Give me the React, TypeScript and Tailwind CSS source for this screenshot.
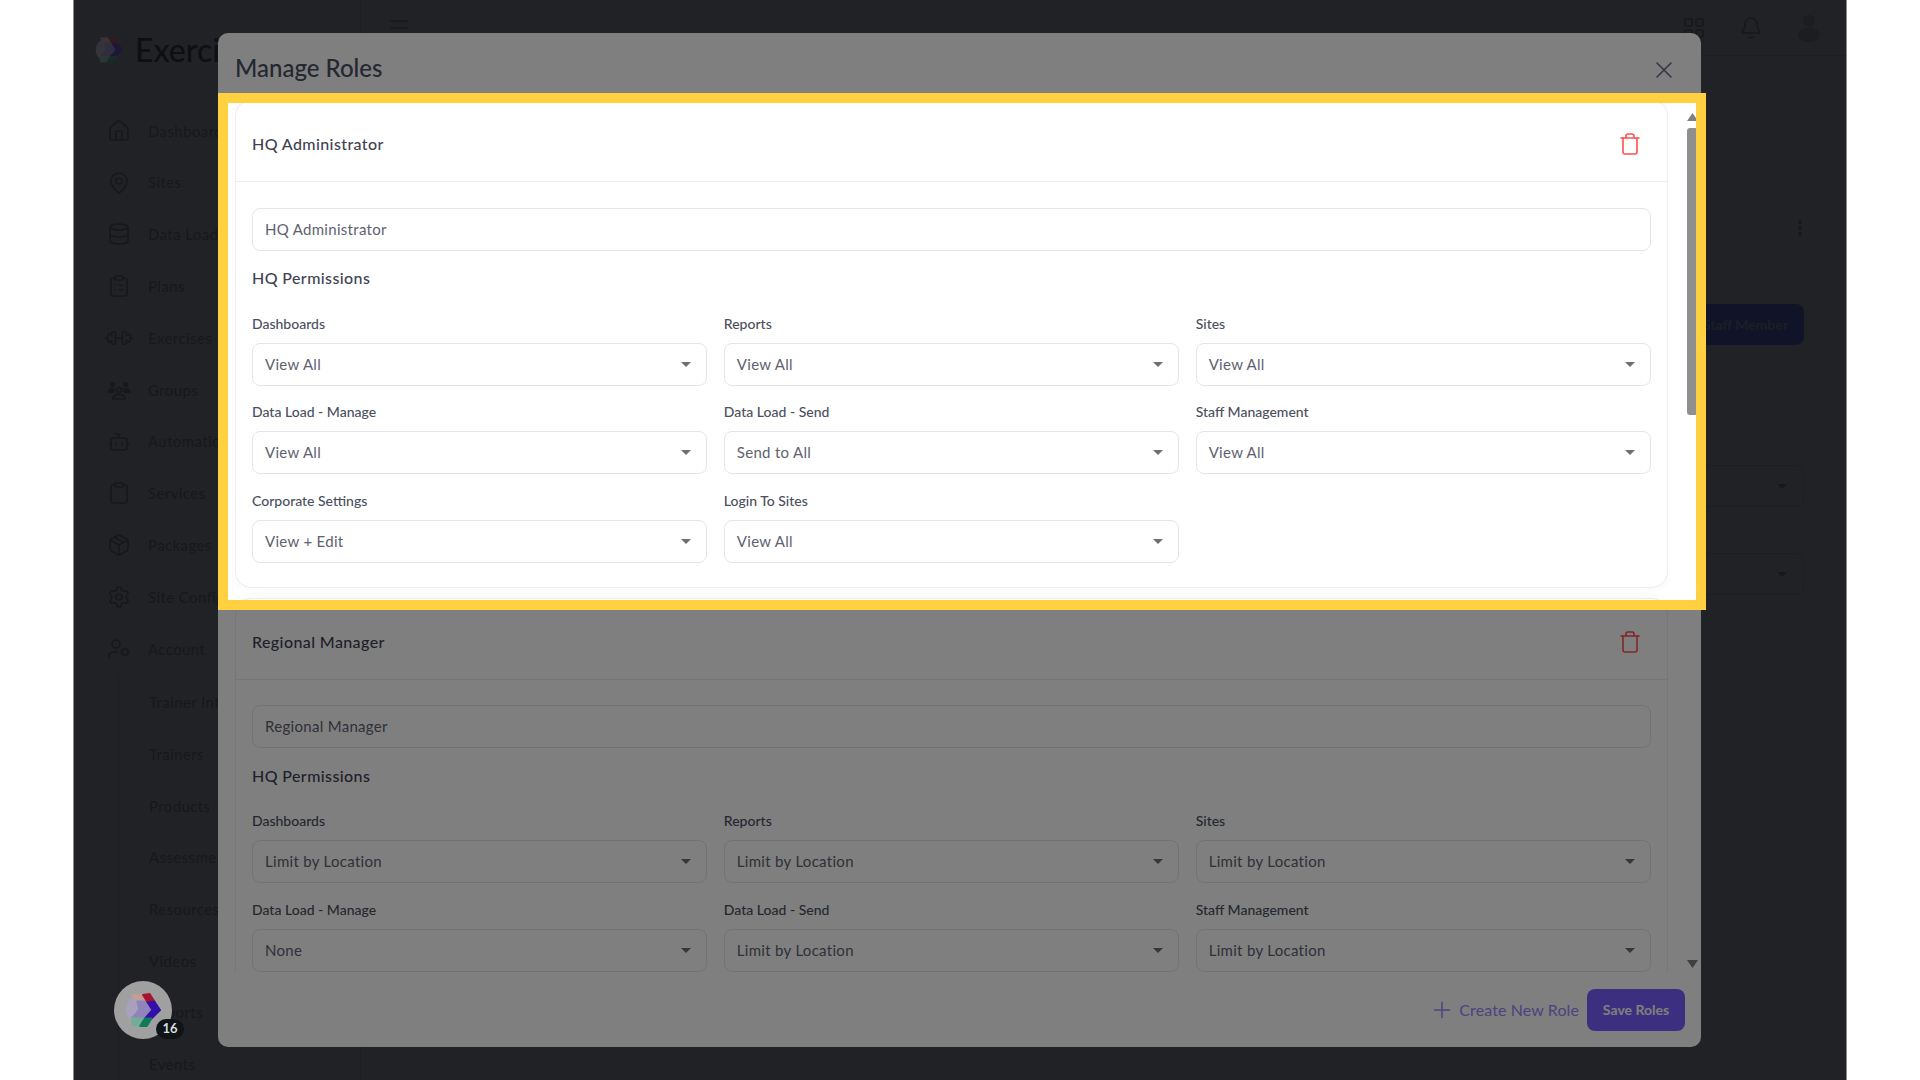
import {
  Bell,
  Bot,
  Clipboard,
  ClipboardList,
  Database,
  Dumbbell,
  Home,
  LayoutGrid,
  MapPin,
  Menu,
  MoreVertical,
  Package,
  Plus,
  Settings,
  Trash,
  UserCog,
  X,
} from "lucide-react";

function GroupIcon({ size }: { size: number }) {
  return (
    <svg viewBox="0 0 24 24" width={size} height={size} fill="currentColor">
      <circle cx="5.5" cy="6.5" r="2.6" />
      <circle cx="18.5" cy="6.5" r="2.6" />
      <path d="M0.5 15c0-3 2-5 5-5 1.2 0 2 .3 2.8 .8-.8 1-1.2 2.4-1 4.2z" />
      <path d="M23.5 15c0-3-2-5-5-5-1.2 0-2 .3-2.8 .8 .8 1 1.2 2.4 1 4.2z" />
      <circle cx="12" cy="12" r="2.5" fill="none" stroke="currentColor" strokeWidth="1.6" />
      <path d="M6 21c0-3 2.6-4.6 6-4.6s6 1.6 6 4.6z" fill="none" stroke="currentColor" strokeWidth="1.6" />
    </svg>
  );
}

const navItems = [
  { label: "Dashboard", icon: Home, iconClass: "" },
  { label: "Sites", icon: MapPin, iconClass: "" },
  { label: "Data Load", icon: Database, iconClass: "" },
  { label: "Plans", icon: ClipboardList, iconClass: "" },
  { label: "Exercises", icon: Dumbbell, iconClass: "rotate-45" },
  { label: "Groups", icon: GroupIcon, iconClass: "" },
  { label: "Automation", icon: Bot, iconClass: "" },
  { label: "Services", icon: Clipboard, iconClass: "" },
  { label: "Packages", icon: Package, iconClass: "" },
  { label: "Site Config", icon: Settings, iconClass: "" },
  { label: "Account", icon: UserCog, iconClass: "" },
];

const subItems = [
  "Trainer Info",
  "Trainers",
  "Products",
  "Assessments",
  "Resources",
  "Videos",
  "Reports",
  "Events",
];

const roles = [
  {
    name: "HQ Administrator",
    permissions: [
      ["Dashboards", "View All"],
      ["Reports", "View All"],
      ["Sites", "View All"],
      ["Data Load - Manage", "View All"],
      ["Data Load - Send", "Send to All"],
      ["Staff Management", "View All"],
      ["Corporate Settings", "View + Edit"],
      ["Login To Sites", "View All"],
    ],
  },
  {
    name: "Regional Manager",
    permissions: [
      ["Dashboards", "Limit by Location"],
      ["Reports", "Limit by Location"],
      ["Sites", "Limit by Location"],
      ["Data Load - Manage", "None"],
      ["Data Load - Send", "Limit by Location"],
      ["Staff Management", "Limit by Location"],
    ],
  },
];

function Logo({ className }: { className: string }) {
  return (
    <svg viewBox="0 0 38 38" className={className} strokeWidth="2" strokeLinejoin="round">
      <circle cx="17" cy="19" r="16" fill="#a9a0bc" />
      <polygon points="8,3 18,3 24,10 13,10" fill="#c49c98" stroke="#c49c98" />
      <polygon points="13,10 24,10 30,19 21,28 7,28 15,19" fill="#8f84bc" stroke="#8f84bc" />
      <polygon points="7,28 21,28 17,35 8,35" fill="#74ad96" stroke="#74ad96" />
      <polygon points="19,3 26,2 31,10 24,11" fill="#a8142c" stroke="#a8142c" />
      <polygon points="24,11 31,10 37,19 28,28 21,28 29,19" fill="#3410a8" stroke="#3410a8" />
      <polygon points="21,28 28,28 23,36 16,36" fill="#0f7a5c" stroke="#0f7a5c" />
    </svg>
  );
}

function Caret({ className }: { className: string }) {
  return (
    <svg viewBox="0 0 10 5" className={className}>
      <polygon points="0,0 10,0 5,5" fill="currentColor" />
    </svg>
  );
}

function SelectBox({ value }: { value: string }) {
  return (
    <div className="flex h-[43px] items-center justify-between rounded-lg border border-[#e4e4ec] bg-white pl-3 pr-[15px] text-[15px] tracking-[0.3px] text-[#5e6270]">
      <span>{value}</span>
      <Caret className="h-[5px] w-[10px] text-[#6f6f6f]" />
    </div>
  );
}

function RoleCard({ name, permissions }: (typeof roles)[number]) {
  return (
    <div className="shrink-0 rounded-2xl border border-[#ececf1] bg-white shadow-[0_0_12px_rgba(0,0,0,0.04)]">
      <div className="flex h-[81px] items-center justify-between border-b border-[#ececf1] pl-4 pr-[25px] pt-[6px]">
        <span className="text-base font-medium tracking-[0.4px] text-[#3f4254]">{name}</span>
        <Trash size={24} strokeWidth={1.6} className="text-[#ff4f4f]" />
      </div>
      <div className="pb-[24.5px] pl-4 pr-4 pt-[25.5px]">
        <div className="flex h-[43px] items-center rounded-lg border border-[#e4e4ec] pl-3 text-[15px] tracking-[0.3px] text-[#5e6270]">
          {name}
        </div>
        <div className="mt-[15.5px] flex h-6 items-center text-base font-medium tracking-[0.4px] text-[#3f4254]">
          HQ Permissions
        </div>
        <div className="mt-[23.5px] grid grid-cols-3 gap-x-[16.5px] gap-y-[16.5px]">
          {permissions.map(([label, value]) => (
            <div key={label}>
              <div className="mb-[9px] flex h-5 items-center text-sm font-medium text-[#4b4f5e]">{label}</div>
              <SelectBox value={value} />
            </div>
          ))}
        </div>
      </div>
    </div>
  );
}

function ManageRolesModal() {
  return (
    <div className="absolute left-[144px] top-[33px] flex h-[1014px] w-[1483px] flex-col rounded-[10px] bg-white">
      <div className="flex h-[67px] shrink-0 items-center justify-between pl-[17px] pr-[23px] pt-[2px]">
        <span className="text-[24px] font-medium text-[#4a4e62]">Manage Roles</span>
        <X size={28} strokeWidth={1.4} className="mt-[4px] text-[#6b7080]" />
      </div>
      <div className="flex h-[872px] shrink-0 pl-[17px]">
        <div className="flex w-[1433px] shrink-0 flex-col gap-[9.5px] overflow-hidden">
          {roles.map((role) => (
            <RoleCard key={role.name} {...role} />
          ))}
        </div>
        <div className="ml-[19px] flex w-[11px] shrink-0 flex-col">
          <svg viewBox="0 0 11 8" className="mt-[13px] h-2 w-[11px] text-[#808080]">
            <polygon points="0,8 11,8 5.5,0" fill="currentColor" />
          </svg>
          <div className="mt-[7px] h-[287px] w-[11px] rounded-[3px] bg-[#8f8f8f]" />
          <svg viewBox="0 0 11 8" className="mb-[4px] mt-auto h-2 w-[11px] text-[#808080]">
            <polygon points="0,0 11,0 5.5,8" fill="currentColor" />
          </svg>
        </div>
      </div>
      <div className="flex flex-1 items-center justify-end gap-2 pr-4">
        <div className="flex items-center gap-1 text-base tracking-[0.1px] text-[#9a84ff]">
          <Plus size={26} strokeWidth={1.4} />
          <span>Create New Role</span>
        </div>
        <button className="h-[42px] w-[98px] rounded-lg bg-[#7a5eff] text-sm font-bold text-white">Save Roles</button>
      </div>
    </div>
  );
}

export default function App() {
  return (
    <div className="h-[1080px] overflow-hidden bg-white [font-family:Lato,sans-serif]">
      <div className="relative mx-auto flex h-[1080px] w-[1774px] overflow-hidden border-x border-[#8c8c8c] bg-[#42444c]">
        {/* page behind the modal */}
        <aside className="flex w-[287px] shrink-0 flex-col border-r border-[#3b3d44] text-[#2e3037]">
          <div className="flex h-[105px] shrink-0 items-center gap-[12px] pb-[5px] pl-[21px]">
            <Logo className="h-[32px] w-[28px] opacity-40" />
            <span className="text-[32px] font-medium text-[#1c1e25]">Exercise</span>
          </div>
          {navItems.map(({ label, icon: Icon, iconClass }) => (
            <div key={label} className="flex h-[51.8px] shrink-0 items-center gap-[17px] pl-[33px] text-[15px] tracking-[0.4px]">
              <Icon size={24} strokeWidth={1.6} className={iconClass} />
              <span>{label}</span>
            </div>
          ))}
          <div className="ml-[44px] border-l border-[#3b3d44] pt-[2px]">
            {subItems.map((label) => (
              <div key={label} className="flex h-[51.7px] items-center pl-[30px] text-[15px] tracking-[0.4px]">
                {label}
              </div>
            ))}
          </div>
        </aside>
        <main className="flex min-w-0 flex-1 flex-col text-[#2e3037]">
          <header className="flex h-[56px] shrink-0 items-center justify-between border-b border-[#3b3d44] pl-[26px] pr-[23px]">
            <Menu size={24} strokeWidth={1.6} />
            <div className="flex items-center gap-[32.5px]">
              <LayoutGrid size={24} strokeWidth={1.6} />
              <Bell size={24} strokeWidth={1.6} />
              <svg viewBox="0 0 28 28" width={28} height={28} fill="currentColor" className="text-[#383a41]">
                <circle cx="14" cy="7" r="6" />
                <ellipse cx="14" cy="21" rx="11" ry="7" />
              </svg>
            </div>
          </header>
          <div className="flex flex-col items-end pr-[42px]">
            <MoreVertical size={20} strokeWidth={2.4} className="mr-[-6px] mt-[162px]" />
            <div className="mt-[66px] flex h-[41px] w-[200px] items-center justify-end rounded-lg bg-[#232650] pr-4 text-sm font-bold text-[#3a3c4a]">
              Add Staff Member
            </div>
            <div className="mt-[120px] flex h-[42px] w-[300px] items-center justify-end rounded-lg border border-[#3b3d44] pr-[16px]">
              <Caret className="h-[5px] w-[10px]" />
            </div>
            <div className="mt-[46px] flex h-[42px] w-[300px] items-center justify-end rounded-lg border border-[#3b3d44] pr-[16px]">
              <Caret className="h-[5px] w-[10px]" />
            </div>
          </div>
        </main>

        <ManageRolesModal />

        {/* spotlight over the first role card, dims everything else */}
        <div className="pointer-events-none absolute left-[144px] top-[93px] h-[517px] w-[1488px] border-[10px] border-[#ffd140] shadow-[0_0_0_3000px_rgba(0,0,0,0.5)]" />

        {/* floating help widget */}
        <div className="absolute left-[40px] top-[981px] z-10 flex h-[58px] w-[58px] items-center justify-center rounded-full bg-[#a0a0a0]">
          <Logo className="h-[36px] w-[36px]" />
          <span className="absolute left-[42px] top-[38px] flex h-5 w-7 items-center justify-center rounded-full bg-[#0f1418] text-[13px] font-bold text-[#dddddd]">
            16
          </span>
        </div>
      </div>
    </div>
  );
}
